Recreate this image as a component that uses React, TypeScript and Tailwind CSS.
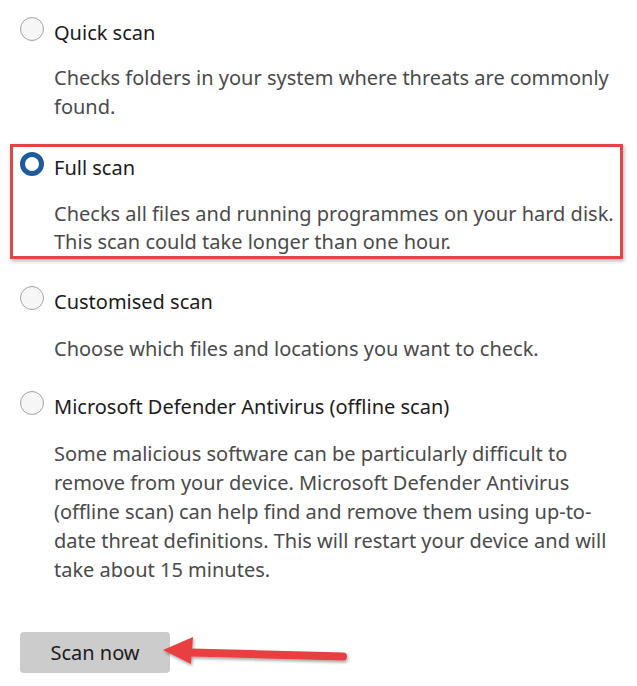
import React from "react";

const font = { fontFamily: '"Noto Sans", "Open Sans", sans-serif' };

function Radio({ selected }: { selected?: boolean }) {
  if (selected) {
    return (
      <div className="w-[24px] h-[24px] shrink-0 rounded-full border-[5px] border-[#1e5b9c] bg-white" />
    );
  }
  return (
    <div className="w-[24px] h-[24px] shrink-0 rounded-full border-[1.5px] border-[#a3a3a3] bg-[#f6f6f6]" />
  );
}

function Title({ selected, children }: { selected?: boolean; children: React.ReactNode }) {
  return (
    <div className="flex items-start gap-[10px]">
      <Radio selected={selected} />
      <div className="mt-[1px] text-[20px] leading-[30px] text-[#1b1b1b] whitespace-nowrap">{children}</div>
    </div>
  );
}

function Desc({ lines, lh = "leading-[29px]", mt }: { lines: string[]; lh?: string; mt: string }) {
  return (
    <div className={`pl-[34px] ${mt} text-[20px] ${lh} text-[#4a4a4a]`}>
      {lines.map((l, i) => (
        <div key={i} className="whitespace-nowrap">
          {l}
        </div>
      ))}
    </div>
  );
}

export default function App() {
  return (
    <div className="relative w-[637px] h-[686px] bg-white overflow-hidden" style={font}>
      <div className="flex flex-col pl-[20px] pt-[17px]">
        <Title>Quick scan</Title>
        <Desc
          mt="mt-[15px]"
          lines={["Checks folders in your system where threats are commonly", "found."]}
        />

        <div className="mt-[23px] -ml-[10px] w-[613px] border-[3px] border-[#e04646] shadow-[1px_2px_4px_rgba(0,0,0,0.3)] pl-[7px] pt-[5px] pb-0">
          <Title selected>Full scan</Title>
          <Desc
            mt="mt-[17px]"
            lh="leading-[28px]"
            lines={[
              "Checks all files and running programmes on your hard disk.",
              "This scan could take longer than one hour.",
            ]}
          />
        </div>

        <div className="mt-[27px]">
          <Title>Customised scan</Title>
          <Desc mt="mt-[17px]" lines={["Choose which files and locations you want to check."]} />
        </div>

        <div className="mt-[28px]">
          <Title>Microsoft Defender Antivirus (offline scan)</Title>
          <Desc
            mt="mt-[17px]"
            lines={[
              "Some malicious software can be particularly difficult to",
              "remove from your device. Microsoft Defender Antivirus",
              "(offline scan) can help find and remove them using up-to-",
              "date threat definitions. This will restart your device and will",
              "take about 15 minutes.",
            ]}
          />
        </div>

        <div className="mt-[48px]">
          <button className="w-[150px] h-[41px] rounded-[4px] bg-[#cccccc] text-[20px] text-[#1b1b1b]" style={font}>
            Scan now
          </button>
        </div>
      </div>

      <svg
        className="absolute left-0 top-0 pointer-events-none"
        width="637"
        height="686"
        viewBox="0 0 637 686"
      >
        <defs>
          <filter id="sh" x="-10%" y="-50%" width="120%" height="200%">
            <feDropShadow dx="1" dy="2" stdDeviation="1.5" floodColor="#000" floodOpacity="0.35" />
          </filter>
        </defs>
        <g filter="url(#sh)">
          <line x1="190" y1="652.5" x2="343" y2="656.5" stroke="#e8403f" strokeWidth="8" strokeLinecap="round" />
          <polygon points="163,650 193,637 191,664" fill="#e8403f" />
        </g>
      </svg>
    </div>
  );
}
